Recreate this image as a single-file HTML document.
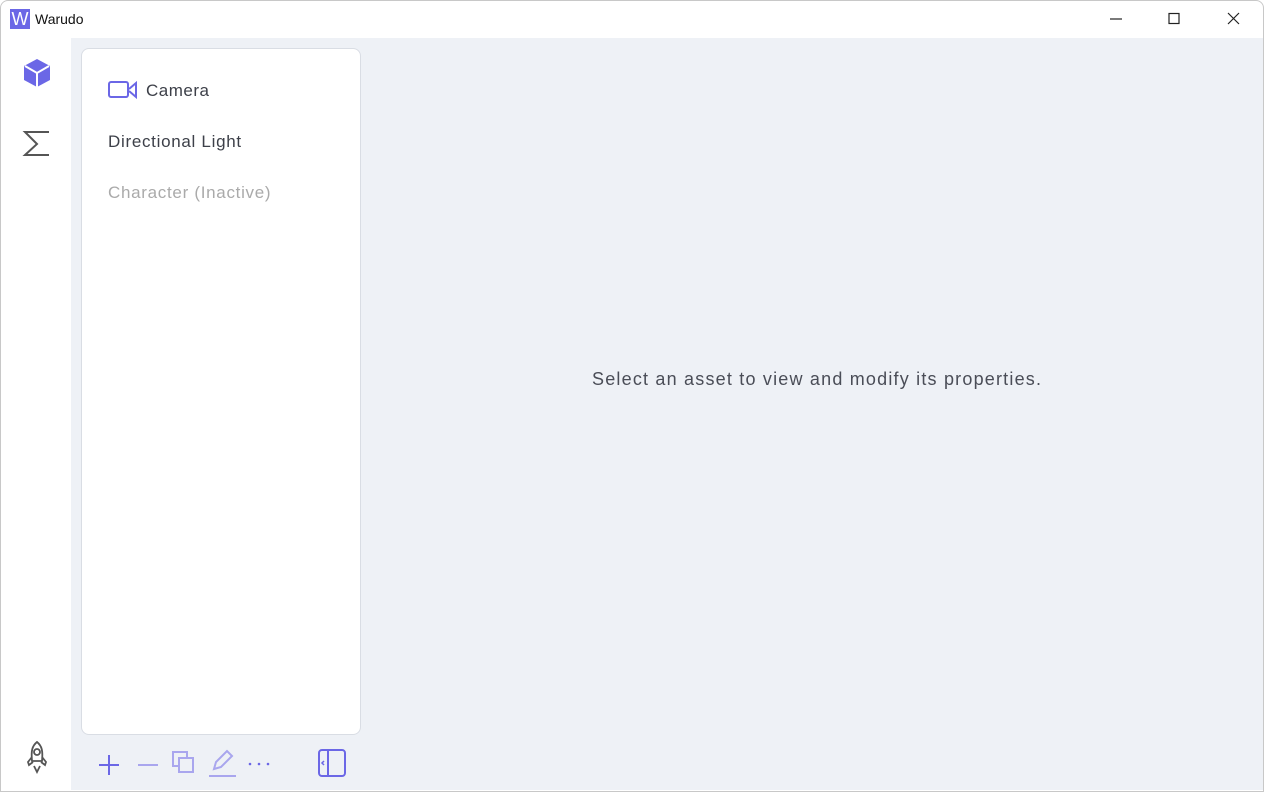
<!DOCTYPE html>
<html><head><style>
body{margin:0;width:1264px;height:792px;background:#fff;font-family:"Liberation Sans",sans-serif;position:relative;overflow:hidden}
.abs{position:absolute}
.main{left:71px;top:38px;width:1192px;height:752px;background:#eef1f6}
.panel{left:81px;top:48px;width:278px;height:685px;background:#fff;border:1px solid #d9dde4;border-radius:8px}
.item{position:absolute;left:26px;font-size:17px;letter-spacing:0.7px}
</style></head><body>
<div class="abs" style="left:0;top:0;width:1264px;height:792px;border:1px solid #c8c8c8;box-sizing:border-box;border-radius:8px 8px 0 0"></div>
<div class="abs" style="left:10px;top:9px;width:20px;height:20px;background:#6b67e6;color:#fff;font-size:18px;line-height:20px;text-align:center">W</div>
<div class="abs" style="left:35px;top:11px;font-size:14px;color:#111">Warudo</div>
<svg class="abs" style="left:1100px;top:8px" width="150" height="22" fill="none" stroke="#222" stroke-width="1.2">
<line x1="10" y1="11" x2="22" y2="11"/><rect x="69" y="5.5" width="10" height="10"/><path d="M128 5l11 11M139 5l-11 11"/></svg>
<div class="abs main"></div>
<svg class="abs" style="left:21px;top:57px" width="32" height="32"><path d="M16 2l13 7v14l-13 7-13-7V9z" fill="#6b67e6"/><path d="M4 9l12 7 12-7M16 16v14" stroke="#fff" stroke-width="2" fill="none"/></svg>
<svg class="abs" style="left:22px;top:129px" width="30" height="30" fill="none" stroke="#555" stroke-width="2"><path d="M27 3H3l12 12L3 26h24"/></svg>
<svg class="abs" style="left:24px;top:740px" width="26" height="36" fill="none" stroke="#555" stroke-width="1.8"><path d="M13 2c5 4 6 9 5 19H8C7 11 8 6 13 2z"/><circle cx="13" cy="12" r="3"/><path d="M8 17l-4 5 1 3 4-3M18 17l4 5-1 3-4-3M10 26l3 6 3-6"/></svg>
<div class="abs panel">
<svg class="abs" style="left:26px;top:31px" width="30" height="20" fill="none" stroke="#6b67e6" stroke-width="2"><rect x="1" y="2" width="19" height="15" rx="2"/><path d="M21 9l7-6v14l-7-6"/></svg>
<div class="item" style="left:64px;top:32px;color:#3d4049;letter-spacing:0.5px">Camera</div>
<div class="item" style="top:83px;color:#3d4049">Directional Light</div>
<div class="item" style="top:134px;color:#aaa">Character (Inactive)</div>
</div>
<svg class="abs" style="left:95px;top:745px" width="260" height="36" fill="none" stroke-width="2">
<path d="M14 10v20M4 20h20" stroke="#6b67e6"/>
<path d="M43 20h20" stroke="#a9a6ee"/>
<rect x="78" y="7" width="14" height="14" stroke="#a9a6ee"/><rect x="84" y="13" width="14" height="14" stroke="#a9a6ee" fill="#eef1f6"/>
<path d="M119 24l2-7 11-11 5 5-11 11z" stroke="#a9a6ee"/><path d="M114 31h27" stroke="#a9a6ee"/>
<circle cx="155" cy="19" r="1.3" fill="#6b67e6" stroke="none"/><circle cx="164" cy="19" r="1.3" fill="#6b67e6" stroke="none"/><circle cx="173" cy="19" r="1.3" fill="#6b67e6" stroke="none"/>
<rect x="224" y="5" width="26" height="26" rx="3" stroke="#6b67e6"/><path d="M233 5v26" stroke="#6b67e6"/><path d="M229 16l-2 2 2 2" stroke="#6b67e6" stroke-width="1.5"/>
</svg>
<div class="abs" style="left:592px;top:369px;font-size:18px;color:#4a4d57;letter-spacing:1.2px">Select an asset to view and modify its properties.</div>
</body></html>
